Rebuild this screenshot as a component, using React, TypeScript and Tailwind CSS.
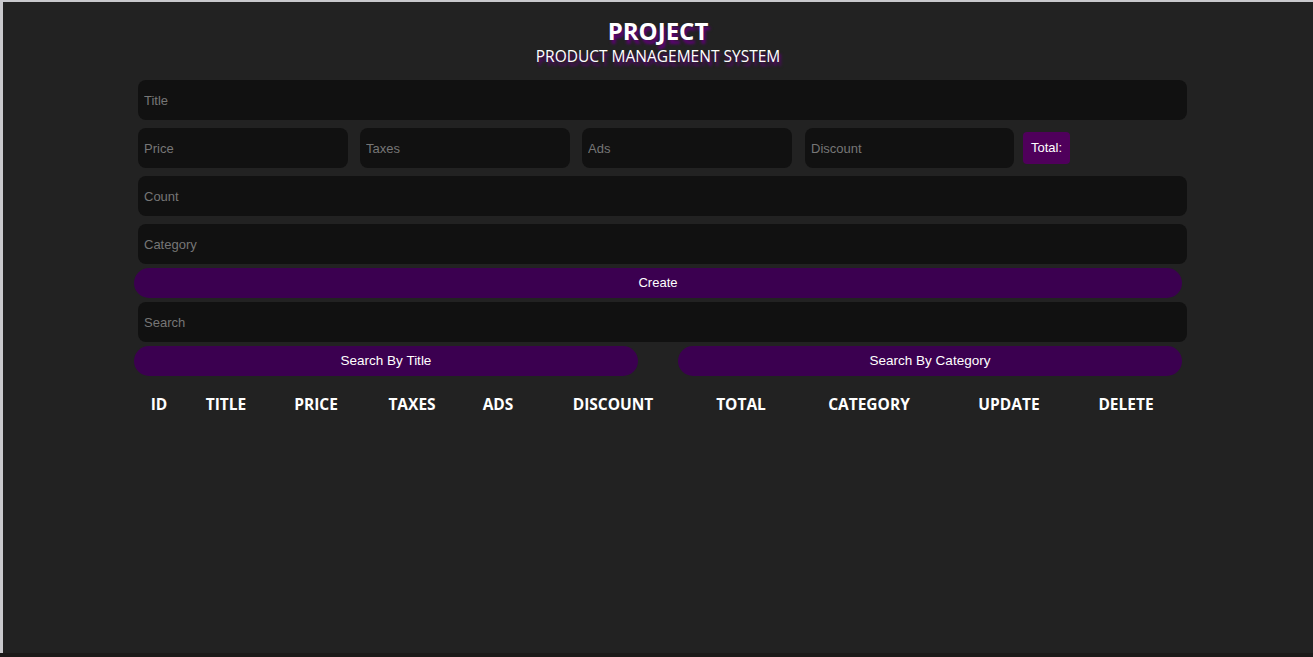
import React from "react";

const heads = ["ID", "TITLE", "PRICE", "TAXES", "ADS", "DISCOUNT", "TOTAL", "CATEGORY", "UPDATE", "DELETE"];

function Field({ placeholder, className = "" }: { placeholder: string; className?: string }) {
  return (
    <input
      placeholder={placeholder}
      className={
        "h-10 rounded-lg bg-[#111111] px-[6px] text-[13px] text-white outline-none placeholder:text-[#767676] " +
        className
      }
    />
  );
}

export default function App() {
  return (
    <div className="flex h-[657px] flex-col overflow-hidden bg-[#c9c9cd] pt-[2px] pl-[3px] font-['Liberation_Sans',Arial,sans-serif]">
      <div className="flex-1 bg-[#222222]">
        <div className="mx-auto w-[1048px]">
          <div className="pt-[14px] text-center font-['Open_Sans',sans-serif] text-white">
            <h1 className="text-[24px] leading-[30px] font-bold [text-shadow:2px_4px_3px_#5f0078]">PROJECT</h1>
            <p className="text-[15.5px] leading-[21px] [text-shadow:2px_4px_3px_#5f0078]">PRODUCT MANAGEMENT SYSTEM</p>
          </div>

          <div className="mt-[13px] flex flex-col">
            <Field placeholder="Title" className="ml-1 w-[1049px]" />
            <div className="mt-2 ml-1 flex items-center gap-3">
              <Field placeholder="Price" className="w-[210px]" />
              <Field placeholder="Taxes" className="w-[210px]" />
              <Field placeholder="Ads" className="w-[210px]" />
              <Field placeholder="Discount" className="ml-px w-[209px]" />
              <span className="ml-[-3px] flex h-8 w-[47px] items-center justify-center rounded bg-[#4f005b] text-[13px] text-white">
                Total:
              </span>
            </div>
            <Field placeholder="Count" className="mt-2 ml-1 w-[1049px]" />
            <Field placeholder="Category" className="mt-2 ml-1 w-[1049px]" />
            <button className="mt-1 h-[30px] w-full rounded-full bg-[#3b0050] text-[13px] text-white">Create</button>
            <Field placeholder="Search" className="mt-1 ml-1 w-[1049px]" />
            <div className="mt-1 flex justify-between">
              <button className="h-[30px] w-[504px] rounded-full bg-[#3b0050] text-[13.5px] text-white">Search By Title</button>
              <button className="h-[30px] w-[504px] rounded-full bg-[#3b0050] text-[13.5px] text-white">Search By Category</button>
            </div>
          </div>

          <div className="mt-[18px] grid grid-cols-[50px_84px_96px_96px_76px_154px_102px_154px_126px_108px] font-['Open_Sans',sans-serif] text-[15.5px] leading-[20px] font-bold text-white">
            {heads.map((h) => (
              <div key={h} className="text-center">
                {h}
              </div>
            ))}
          </div>
        </div>
      </div>
      <div className="ml-[-3px] h-[4px] bg-[#1c1a19]" />
    </div>
  );
}
